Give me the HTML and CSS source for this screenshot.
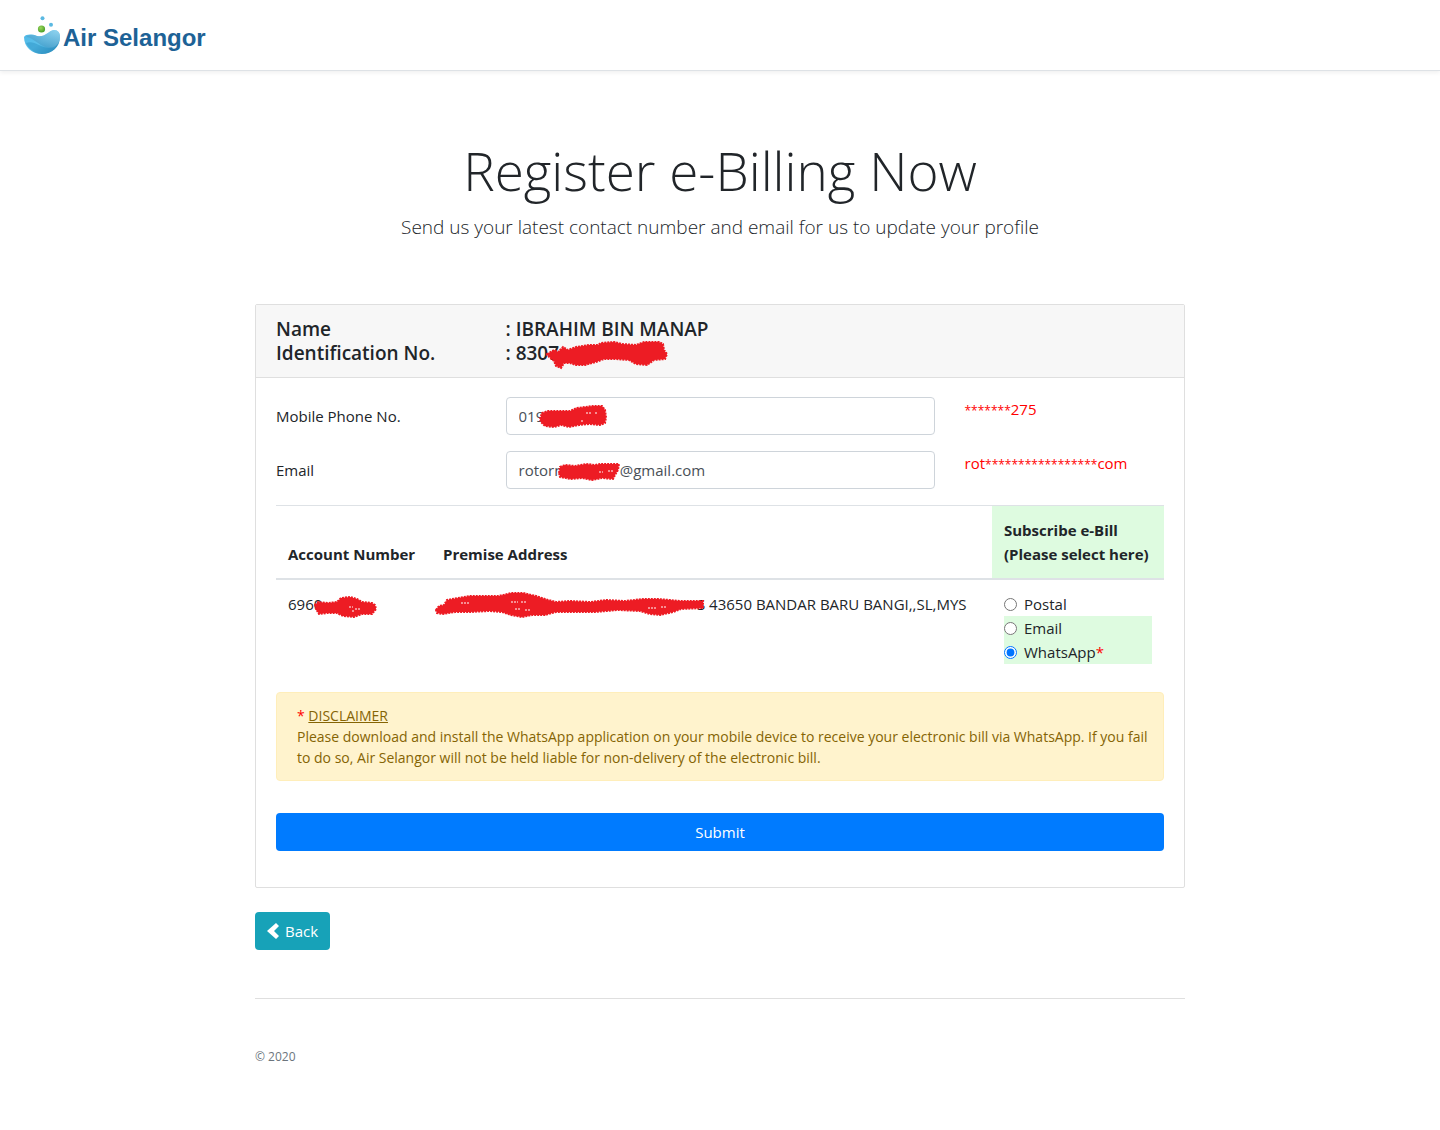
FILE: index.html
```html
<!DOCTYPE html>
<html lang="en">

<head>
    <meta charset="UTF-8">
    <meta name="viewport" content="width=device-width, initial-scale=1.0">
    <title>Register e-Billing</title>
    <link rel="stylesheet" href="styles.css">
</head>

<body>
    <header class="navbar">
        <a href="#" class="brand">
            <svg class="brand-icon" width="37" height="38" viewBox="0 0 37 38" aria-hidden="true">
                <defs>
                    <linearGradient id="water" x1="0" y1="0" x2="1" y2="1">
                        <stop offset="0" stop-color="#4db9e8" />
                        <stop offset="0.5" stop-color="#5cc0ea" />
                        <stop offset="1" stop-color="#1f7cae" />
                    </linearGradient>
                    <linearGradient id="wave" x1="0" y1="1" x2="1" y2="0">
                        <stop offset="0" stop-color="#2489bd" />
                        <stop offset="1" stop-color="#a5dcf2" />
                    </linearGradient>
                    <radialGradient id="leaf" cx="0.4" cy="0.35" r="0.6">
                        <stop offset="0" stop-color="#9bd65c" />
                        <stop offset="1" stop-color="#4fa32b" />
                    </radialGradient>
                </defs>
                <path d="M0 21C2 18 8 18 13 20C21 22 24 15 30 14C34 14 36 17 36 21C36 31 28 38 18 38C8 38 0 31 0 21Z" fill="url(#water)" />
                <path d="M13 20C21 22 24 15 30 14C34 14 36 17 36 21C36 25 34 28 31 31C27 33 21 31 17 29C12 26 7 21 2 21C6 18 9 19 13 20Z" fill="url(#wave)" opacity="0.75" />
                <path d="M2 27C10 24 15 31 24 32C28 32 31 31 34 28C27 41 9 41 2 27Z" fill="#2b93c6" opacity="0.5" />
                <circle cx="17.500" cy="13" r="3.600" fill="url(#leaf)" />
                <circle cx="18.500" cy="2.300" r="2" fill="#5bb9e2" />
                <circle cx="27" cy="8.700" r="2" fill="#5bb9e2" />
            </svg>
            <span class="brand-name">Air Selangor</span>
        </a>
    </header>

    <div class="container">
        <div class="intro">
            <h1>Register e-Billing Now</h1>
            <p>Send us your latest contact number and email for us to update your profile</p>
        </div>

        <form class="card">
            <div class="card-header">
                <div class="row">
                    <span>Name</span>
                    <span class="wide">: IBRAHIM BIN MANAP</span>
                </div>
                <div class="row">
                    <span>Identification No.</span>
                    <span class="wide redacted">: 8307
                        <svg class="scribble scribble-id" width="122" height="30" viewBox="0 0 122 30" aria-hidden="true">
                            <path d="M1 13L8 9L12 11L17 6L22 9L30 6L43 4L52 4L55 2L68 1L76 3L90 4L98 1L113 1L117 3L118 9L121 13L119 18L108 19L101 24L90 23L83 19L70 18L58 18L50 21L39 24L30 24L24 22L18 22L15 27L10 25L8 20L1 14Z" />
                        </svg>
                    </span>
                </div>
            </div>

            <div class="card-body">
                <div class="row form-row">
                    <label for="mobile">Mobile Phone No.</label>
                    <div class="wide redacted">
                        <input id="mobile" class="input" type="text" value="019">
                        <svg class="scribble scribble-mobile" width="68" height="24" viewBox="0 0 68 24" aria-hidden="true">
                            <path d="M1 14L3 8L9 6L18 6L31 6L38 3L46 2L54 1L63 1L66 5L67 12L66 18L61 20L50 19L40 20L30 22L22 20L15 22L6 21L2 17Z" />
                            <path class="gap" d="M47 8h6M56 8h3M42 16h2" />
                        </svg>
                    </div>
                    <span class="hint"><span class="mask">*******</span>275</span>
                </div>
                <div class="row form-row">
                    <label for="email">Email</label>
                    <div class="wide redacted">
                        <input id="email" class="input" type="text" value="rotorn&emsp;&emsp;&emsp;&ensp;&nbsp;@gmail.com">
                        <svg class="scribble scribble-email" width="62" height="18" viewBox="0 0 62 18" aria-hidden="true">
                            <path d="M1 10L2 4L7 2L17 3L28 1L37 2L42 1L55 1L61 1L60 7L57 12L55 16L44 15L34 17L24 15L13 16L2 14Z" />
                            <path class="gap" d="M41 9h4M50 8h5" />
                        </svg>
                    </div>
                    <span class="hint">rot<span class="mask">*****************</span>com</span>
                </div>

                <table class="accounts">
                    <colgroup>
                        <col class="col-account">
                        <col>
                        <col class="col-subscribe">
                    </colgroup>
                    <thead>
                        <tr>
                            <th>Account Number</th>
                            <th>Premise Address</th>
                            <th class="highlight">Subscribe e-Bill<br>(Please select here)</th>
                        </tr>
                    </thead>
                    <tbody>
                        <tr>
                            <td>
                                <div class="redacted">6960
                                    <svg class="scribble scribble-account" width="63" height="22" viewBox="0 0 63 22" aria-hidden="true">
                                        <path d="M1 9L4 6L14 7L23 6L27 2L36 1L43 3L48 6L58 7L61 9L62 13L58 18L48 18L40 21L29 20L23 17L13 17L5 18L2 13Z" />
                                        <path class="gap" d="M35 11h4M41 13h6M38 15h3" />
                                    </svg>
                                </div>
                            </td>
                            <td>
                                <div class="redacted address">S 43650 BANDAR BARU BANGI,,SL,MYS
                                    <svg class="scribble scribble-address" width="270" height="26" viewBox="0 0 270 26" aria-hidden="true">
                                        <path d="M1 18L4 14L9 13L12 8L23 6L35 4L49 4L64 4L76 1L88 1L101 4L113 8L121 10L135 9L155 10L171 8L190 9L208 7L223 7L235 8L245 9L268 9L268 16L246 17L238 20L225 23L215 22L205 19L183 18L160 20L144 20L121 20L110 23L97 23L87 25L76 23L67 20L54 19L35 20L20 20L8 22L2 21Z" />
                                        <path class="gap" d="M26 11h9M76 10h7M86 10h6M80 17h5M90 18h6M213 16h8M226 15h6" />
                                    </svg>
                                </div>
                            </td>
                            <td>
                                <label class="option"><input type="radio" name="bill">Postal</label>
                                <label class="option highlight"><input type="radio" name="bill">Email</label>
                                <label class="option highlight"><input type="radio" name="bill" checked><span>WhatsApp<span class="red">*</span></span></label>
                            </td>
                        </tr>
                    </tbody>
                </table>

                <div class="alert">
                    <span class="red">*</span> <u>DISCLAIMER</u><br>
                    Please download and install the WhatsApp application on your mobile device to receive your electronic bill via WhatsApp. If you fail to do so, Air Selangor will not be held liable for non-delivery of the electronic bill.
                </div>

                <button class="btn submit" type="submit">Submit</button>
            </div>
        </form>

        <button class="btn back" type="button">
            <svg width="13" height="16" viewBox="0 0 13 16" aria-hidden="true">
                <path d="M9 0L12 3L7 8L12 13L9 16L0 8Z" fill="#fff" />
            </svg>
            Back
        </button>

        <footer>
            <small>&copy; 2020</small>
        </footer>
    </div>
</body>

</html>
```

FILE: styles.css
```css
* {
    box-sizing: border-box;
}

body {
    margin: 0;
    font-family: "Open Sans", "Noto Sans", sans-serif;
    font-size: 15px;
    line-height: 24px;
    color: #212529;
    background-color: #fff;
}

.navbar {
    display: flex;
    align-items: center;
    padding: 16px 24px;
    border-bottom: 1px solid #dee2e6;
    box-shadow: 0 2px 4px rgba(0, 0, 0, 0.06);
}

.brand {
    display: flex;
    align-items: center;
    gap: 2px;
    font-family: "Liberation Sans", Arial, sans-serif;
    font-size: 24px;
    font-weight: bold;
    line-height: 32px;
    color: #1d6296;
    text-decoration: none;
}

.brand-name {
    padding-top: 6px;
}

.container {
    max-width: 960px;
    margin: 0 auto;
    padding: 0 15px;
}

.intro {
    padding: 66px 0 62px;
    text-align: center;
}

h1 {
    margin: 0 0 8px;
    font-size: 53px;
    font-weight: 300;
    line-height: 67px;
}

.intro p {
    margin: 0;
    font-size: 19px;
    font-weight: 300;
    line-height: 30px;
}

.card {
    margin-bottom: 24px;
    border: 1px solid #dfdfdf;
    border-radius: 2px;
}

.card-header {
    padding: 12px 20px;
    font-size: 19px;
    font-weight: 600;
    background-color: #f7f7f7;
    border-bottom: 1px solid #dfdfdf;
}

.card-body {
    padding: 19px 20px 36px;
}

.row {
    display: grid;
    grid-template-columns: repeat(4, 1fr);
    column-gap: 30px;
}

.wide {
    grid-column: span 2;
}

.form-row {
    margin-bottom: 16px;
}

.form-row label {
    padding: 7px 0;
}

.input {
    display: block;
    width: 100%;
    height: 38px;
    padding: 6px 12px;
    font: inherit;
    color: #495057;
    border: 1px solid #ced4da;
    border-radius: 4px;
}

.hint,
.red {
    color: #f00;
}

.mask {
    font-size: 12px;
}

/* marker strokes over the private data */
.redacted {
    position: relative;
}

.scribble {
    position: absolute;
    fill: #ed1c24;
    stroke: #ed1c24;
    stroke-width: 2;
    stroke-dasharray: 2 1;
}

.scribble .gap {
    fill: none;
    stroke: #fff;
    stroke-width: 1;
}

.scribble-id {
    left: 40px;
    top: 0;
}

.scribble-mobile {
    left: 33px;
    top: 8px;
}

.scribble-email {
    left: 52px;
    top: 12px;
}

.scribble-account {
    left: 26px;
    top: 4px;
}

.scribble-address {
    left: -8px;
    top: 0;
}

.accounts {
    width: 100%;
    margin-bottom: 16px;
    table-layout: fixed;
    border-collapse: separate;
    border-spacing: 0;
}

.col-account {
    width: 155px;
}

.col-subscribe {
    width: 172px;
}

.accounts th,
.accounts td {
    padding: 12px;
    text-align: left;
    vertical-align: top;
}

.accounts th {
    font-weight: bold;
    vertical-align: bottom;
    white-space: nowrap;
    border-top: 1px solid #dee2e6;
    border-bottom: 2px solid #dee2e6;
}

.address {
    padding-left: 254px;
    white-space: nowrap;
}

.highlight {
    background-color: #defbe0;
}

.option {
    display: flex;
    align-items: center;
    gap: 7px;
}

.option input {
    width: 13px;
    height: 13px;
    margin: 0;
}

.alert {
    margin-bottom: 32px;
    padding: 12px 8px 12px 20px;
    font-size: 14px;
    line-height: 21px;
    color: #856404;
    background-color: #fff3cd;
    border: 1px solid #ffeeba;
    border-radius: 4px;
}

.btn {
    height: 38px;
    padding: 0 12px;
    font: inherit;
    color: #fff;
    border: 0;
    border-radius: 4px;
}

.submit {
    display: block;
    width: 100%;
    background-color: #007bff;
}

.back {
    display: flex;
    align-items: center;
    gap: 5px;
    background-color: #17a2b8;
}

footer {
    margin-top: 48px;
    padding: 44px 0;
    border-top: 1px solid #dfdfdf;
}

footer small {
    font-size: 12px;
    color: #6c757d;
}
```
